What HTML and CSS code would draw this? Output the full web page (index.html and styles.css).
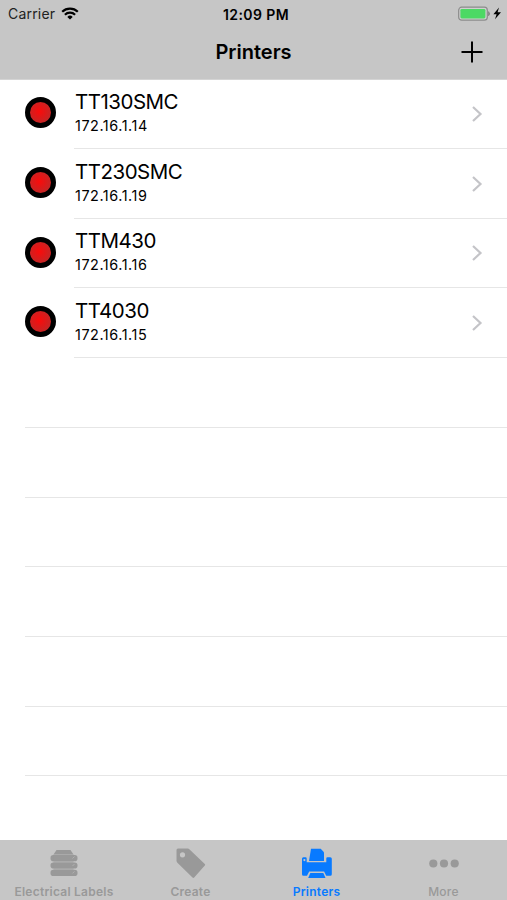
FILE: index.html
```html
<!DOCTYPE html>
<html lang="en">
<head>
  <meta charset="UTF-8">
  <meta name="viewport" content="width=device-width, initial-scale=1">
  <title>Printers</title>
  <link rel="stylesheet" href="styles.css">
</head>
<body>
  <div class="app">
    <header class="header">
      <div class="status">
        <div class="carrier">
          <span>Carrier</span>
          <svg width="18" height="13" viewBox="0 0 18 13" fill="none" stroke="#000" stroke-width="2.2">
            <path d="M1.2 4.8a11.2 11.2 0 0 1 15.6 0"/>
            <path d="M3.9 7.8a7.3 7.3 0 0 1 10.2 0"/>
            <path d="M9 12.6L6.3 9.9a3.9 3.9 0 0 1 5.4 0z" fill="#000" stroke="none"/>
          </svg>
        </div>
        <span class="time">12:09 PM</span>
        <div class="battery">
          <svg width="44" height="16" viewBox="0 0 44 16">
            <rect x="0.7" y="1.2" width="28.6" height="13" rx="3" fill="#d0d0d0" stroke="#8b8b8b" stroke-width="1.2"/>
            <rect x="2.4" y="2.9" width="25" height="9.6" rx="1.4" fill="#4cd964"/>
            <path d="M30.6 5.6q1.8 2.1 0 4.2z" fill="#777" stroke="#777" stroke-width=".6"/>
            <path d="M41 1.500l-5.600 6.700h3.200L37 13.300l6-7h-3.400z" fill="#000"/>
          </svg>
        </div>
      </div>
      <div class="navbar">
        <h1>Printers</h1>
        <button class="add" aria-label="Add">
          <svg width="22" height="22" viewBox="0 0 22 22" stroke="#000" stroke-width="2">
            <path d="M11 .5v21M.5 11h21"/>
          </svg>
        </button>
      </div>
    </header>

    <main class="list">
      <div class="row">
        <span class="dot"></span>
        <div class="info">
          <div class="text"><p class="name">TT130SMC</p><p class="ip">172.16.1.14</p></div>
          <svg class="chevron" width="12" height="18" viewBox="0 0 12 18"><path d="M2 2l7.5 7L2 16"/></svg>
        </div>
      </div>
      <div class="row">
        <span class="dot"></span>
        <div class="info">
          <div class="text"><p class="name">TT230SMC</p><p class="ip">172.16.1.19</p></div>
          <svg class="chevron" width="12" height="18" viewBox="0 0 12 18"><path d="M2 2l7.5 7L2 16"/></svg>
        </div>
      </div>
      <div class="row">
        <span class="dot"></span>
        <div class="info">
          <div class="text"><p class="name">TTM430</p><p class="ip">172.16.1.16</p></div>
          <svg class="chevron" width="12" height="18" viewBox="0 0 12 18"><path d="M2 2l7.5 7L2 16"/></svg>
        </div>
      </div>
      <div class="row">
        <span class="dot"></span>
        <div class="info">
          <div class="text"><p class="name">TT4030</p><p class="ip">172.16.1.15</p></div>
          <svg class="chevron" width="12" height="18" viewBox="0 0 12 18"><path d="M2 2l7.5 7L2 16"/></svg>
        </div>
      </div>
      <div class="row empty"></div>
      <div class="row empty"></div>
      <div class="row empty"></div>
      <div class="row empty"></div>
      <div class="row empty"></div>
      <div class="row empty"></div>
    </main>

    <nav class="tabs">
      <a class="tab labels">
        <svg width="32" height="32" viewBox="0 0 32 32" fill="currentColor">
          <path d="M8.5 2h14l3 4.500H5.500z"/>
          <rect x="2.500" y="7" width="27" height="6.200" rx="2.800"/>
          <rect x="2.500" y="14.400" width="27" height="6.200" rx="2.800"/>
          <rect x="2.500" y="21.800" width="27" height="6.200" rx="2.800"/>
          <path d="M5.500 6.500h20v15.500h-20z" opacity=".5"/>
          <path d="M24.500 10.500l2-2M24.500 18l2-2M24.500 25.400l2-2" stroke="#b5b5b5" stroke-width=".8"/>
        </svg>
        <span>Electrical Labels</span>
      </a>
      <a class="tab create">
        <svg width="32" height="32" viewBox="0 0 32 32" fill="currentColor">
          <path fill-rule="evenodd" d="M3 .6h9.600q1.200 0 2 .8l15.200 14.500q.8.900 0 1.700L19.200 29.600q-.9.800-1.700 0L2.400 14.800q-.9-.9-.9-2V2.100Q1.500.6 3 .6zM7.500 4.200a2.600 2.600 0 1 0 0 5.200 2.600 2.600 0 0 0 0-5.200z"/>
        </svg>
        <span>Create</span>
      </a>
      <a class="tab printers active">
        <svg width="32" height="32" viewBox="0 0 32 32" fill="currentColor">
          <path d="M10 .8h9.700l3.300 3.400V13H8z"/>
          <path fill-rule="evenodd" d="M2.400 9.200h2.100q1.200 0 1.200 1.200v3.800h19.600v-3.800q0-1.200 1.200-1.200h2.800q1.500 0 1.500 1.500v15.500q0 1.500-1.500 1.500h-4.100l-2.100-4.300H8.200l-2.200 4.300H2.500Q1 27.700 1 26.200V10.700q0-1.500 1.400-1.500zM3.400 11a1.100 1.100 0 1 0 0 2.200 1.100 1.100 0 0 0 0-2.200z"/>
          <path d="M9.300 25h13l2.200 5H7.200z"/>
        </svg>
        <span>Printers</span>
      </a>
      <a class="tab more">
        <svg width="32" height="32" viewBox="0 0 32 32" fill="currentColor">
          <circle cx="5.300" cy="15.500" r="4.100"/>
          <circle cx="16" cy="15.500" r="4.100"/>
          <circle cx="26.700" cy="15.500" r="4.100"/>
        </svg>
        <span>More</span>
      </a>
    </nav>
  </div>
</body>
</html>
```
FILE: styles.css
```css
* {
  box-sizing: border-box;
}

body {
  margin: 0;
  font-family: Inter, "Liberation Sans", sans-serif;
  color: #000;
  background: #fff;
}

h1, p {
  margin: 0;
}

.app {
  display: flex;
  flex-direction: column;
  height: 900px;
  overflow: hidden;
}

.header {
  height: 79.7px;
  background: #c6c6c6;
  border-bottom: 1px solid #d4d4d4;
}

.status {
  display: grid;
  grid-template-columns: 1fr auto 1fr;
  align-items: center;
  height: 28px;
  padding: 0 5px 0 8px;
}

.carrier {
  display: flex;
  align-items: center;
  gap: 6px;
  margin-top: -2px;
  font-size: 14px;
  letter-spacing: 0.2px;
  color: #222;
}

.time {
  margin-left: 2px;
  font-size: 14px;
  font-weight: 600;
  letter-spacing: 0.4px;
}

.battery {
  display: flex;
  justify-content: flex-end;
  margin-top: -1px;
}

.navbar {
  display: grid;
  grid-template-columns: 1fr auto 1fr;
  align-items: center;
  height: 48px;
}

.navbar h1 {
  grid-column: 2;
  font-size: 20px;
  font-weight: 600;
  line-height: 24px;
}

.add {
  justify-self: end;
  display: flex;
  margin-right: 24px;
  padding: 0;
  border: 0;
  background: none;
}

.list {
  flex: 1;
}

.row {
  display: flex;
  align-items: center;
  height: 69.6px;
  padding-left: 25px;
}

.dot {
  width: 31px;
  height: 31px;
  margin-top: -3px;
  border: 5px solid #000;
  border-radius: 50%;
  background: radial-gradient(circle at 45% 45%, #fb0b0b 0, #e31616 30%, #c92323 65%);
}

.info {
  flex: 1;
  display: flex;
  justify-content: space-between;
  height: 100%;
  margin-left: 18px;
  padding: 9.5px 24px 0 1px;
  border-bottom: 1px solid #e6e6e6;
}

.name {
  font-size: 20.5px;
  line-height: 26px;
  letter-spacing: -0.5px;
}

.ip {
  font-size: 14.4px;
  line-height: 22px;
  letter-spacing: 0.55px;
}

.chevron {
  margin-top: 16px;
  fill: none;
  stroke: #c4c4c8;
  stroke-width: 2.2;
}

.empty::after {
  content: "";
  flex: 1;
  height: 100%;
  border-bottom: 1px solid #e6e6e6;
}

.tabs {
  display: grid;
  grid-template-columns: 128px 125px 127px 127px;
  height: 60px;
  background: #c6c6c6;
}

.tab {
  display: flex;
  flex-direction: column;
  align-items: center;
  padding-top: 8px;
  color: #999;
  font-size: 12px;
  font-weight: 600;
  line-height: 16px;
  letter-spacing: 0.25px;
}

.tab span {
  margin-top: 4px;
  white-space: nowrap;
}

.active {
  color: #087aff;
}

.more {
  font-weight: 500;
}
```
